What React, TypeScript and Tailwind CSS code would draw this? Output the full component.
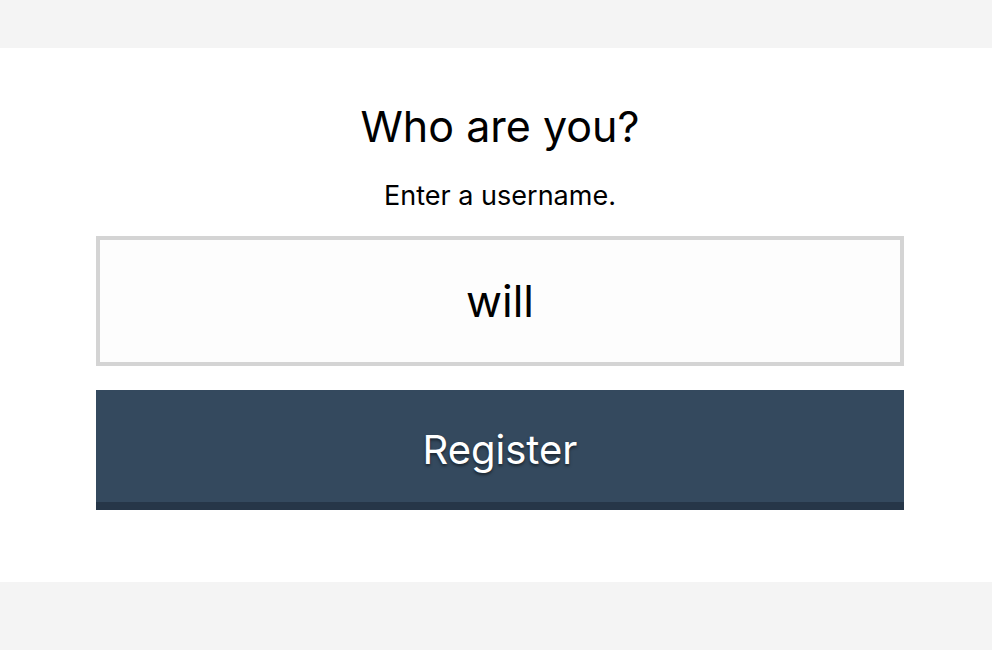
import { useState } from 'react'

const App = () => {
  const [username, setUsername] = useState('will')

  return (
    <div className="min-h-[650px] bg-[#f4f4f4] pt-12 font-['Inter',sans-serif]">
      <div className="bg-white pl-24 pr-[88px] pt-[52px] pb-[72px]">
        {/* Heading */}
        <h1 className="text-center text-[43px] leading-[52px] text-black">
          Who are you?
        </h1>
        <p className="mt-[28px] text-center text-[27px] leading-[32px] text-black">
          Enter a username.
        </p>

        {/* Username */}
        <input
          type="text"
          value={username}
          onChange={(e) => setUsername(e.target.value)}
          className="mt-6 block h-[130px] w-full border-4 border-[#d4d4d4] bg-[#fdfdfd] text-center text-[44px] text-black outline-none"
        />

        {/* Submit */}
        <button className="mt-6 block h-[120px] w-full border-b-8 border-[#263648] bg-[#34495e] pt-2 text-[40px] text-white [text-shadow:0_2px_3px_rgba(0,0,0,0.5)]">
          Register
        </button>
      </div>
    </div>
  )
}

export default App
